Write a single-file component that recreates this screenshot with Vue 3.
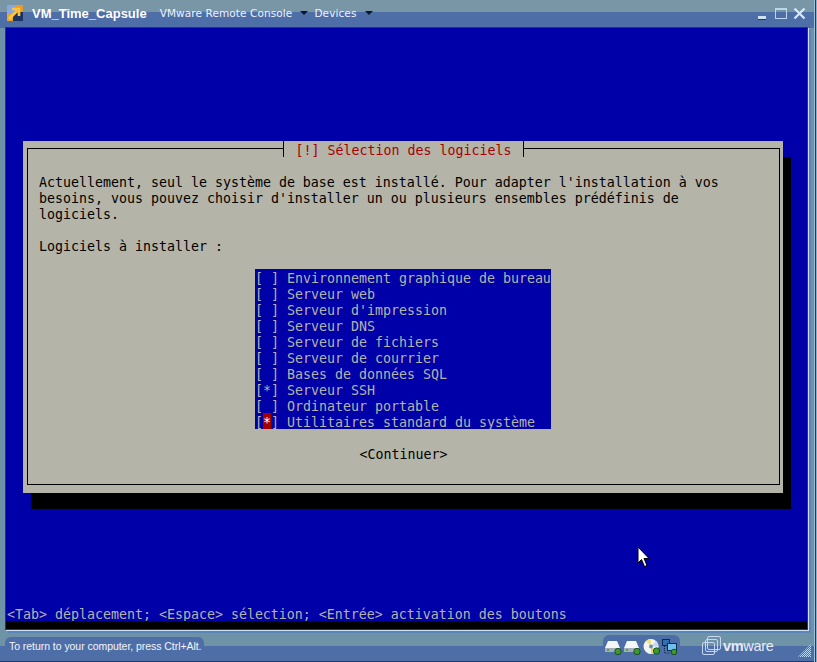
<script setup>
const intro = [
  "Actuellement, seul le système de base est installé. Pour adapter l'installation à vos",
  "besoins, vous pouvez choisir d'installer un ou plusieurs ensembles prédéfinis de",
  "logiciels.",
];
const items = [
  ["[ ]", "Environnement graphique de bureau"],
  ["[ ]", "Serveur web"],
  ["[ ]", "Serveur d'impression"],
  ["[ ]", "Serveur DNS"],
  ["[ ]", "Serveur de fichiers"],
  ["[ ]", "Serveur de courrier"],
  ["[ ]", "Bases de données SQL"],
  ["[*]", "Serveur SSH"],
  ["[ ]", "Ordinateur portable"],
  ["[*]", "Utilitaires standard du système", true],
];
</script>

<template>
  <div class="window">
    <header class="titlebar">
      <svg class="appicon" width="16" height="16" viewBox="0 0 16 16">
        <rect x="0" y="0" width="16" height="16" fill="#1c3464"/>
        <rect x="0" y="0" width="9" height="9" fill="#86a8e0"/>
        <rect x="9" y="0" width="7" height="7" fill="#e89a28"/>
        <rect x="0" y="9" width="6" height="7" fill="#e8a830"/>
        <path d="M2 14 L10 6 M5 4h7v7" stroke="#ffc43c" stroke-width="2.6" fill="none"/>
      </svg>
      <span class="wintitle">VM_Time_Capsule</span>
      <span class="menu">VMware Remote Console</span>
      <i class="caret"></i>
      <span class="menu devices">Devices</span>
      <i class="caret"></i>
      <span class="spacer"></span>
      <span class="wbtn min"></span>
      <span class="wbtn max"></span>
      <svg class="wbtn close" width="13" height="13" viewBox="0 0 13 13">
        <path d="M1.5 1.5 L11.5 11.5 M11.5 1.5 L1.5 11.5" stroke="#d8e8f6" stroke-width="2.2"/>
      </svg>
    </header>

    <main class="console">
      <section class="dialog">
        <div class="frame">
          <div class="dlgtitle"><span>[!] Sélection des logiciels</span></div>
          <p v-for="l in intro" :key="l" class="line">{{ l }}</p>
          <p class="line blank"> </p>
          <p class="line">Logiciels à installer :</p>
          <p class="line blank"> </p>
          <ul class="list">
            <li v-for="it in items" :key="it[1]" class="row">
              <template v-if="it[2]">[<b class="cursor">*</b>]</template>
              <template v-else>{{ it[0] }}</template>
              <span class="label">{{ it[1] }}</span>
            </li>
          </ul>
          <p class="line blank"> </p>
          <p class="line cont">&lt;Continuer&gt;</p>
        </div>
      </section>

      <svg class="pointer" width="14" height="22" viewBox="0 0 14 22">
        <path d="M1 1 V17 L4.5 13.5 L7.5 20.5 L10 19.5 L7 12.5 H12 Z" fill="#fff" stroke="#000" stroke-width="1"/>
      </svg>

      <div class="hint">&lt;Tab&gt; déplacement; &lt;Espace&gt; sélection; &lt;Entrée&gt; activation des boutons</div>
      <div class="blackbar"></div>
    </main>

    <footer class="statusbar">
      <span class="tip">To return to your computer, press Ctrl+Alt.</span>
      <span class="spacer"></span>
      <div class="devs">
        <svg v-for="n in 2" :key="n" width="17" height="15" viewBox="0 0 17 15">
          <path d="M3 1 H12 L15 8 H0 Z" fill="#f4f6f8"/>
          <rect x="0" y="8" width="15" height="4" fill="#a4aebb"/>
          <rect x="2" y="9" width="2" height="2" fill="#4caa3c"/>
          <circle cx="13" cy="11.5" r="3.2" fill="#3c9a2c" stroke="#123c12" stroke-width=".8"/>
        </svg>
        <svg width="17" height="16" viewBox="0 0 17 16">
          <circle cx="8" cy="7.5" r="7.5" fill="#f2f4f6"/>
          <path d="M8 7.5 L3 2 A7.5 7.5 0 0 1 8 0 Z" fill="#f3e27a"/>
          <path d="M8 7.5 L13 13 A7.5 7.5 0 0 1 8 15 Z" fill="#e8d860"/>
          <path d="M8 7.5 L13 2 A7.5 7.5 0 0 1 15.5 7.5 Z" fill="#c4d8f0"/>
          <circle cx="8" cy="7.5" r="2" fill="#6d8fb4"/>
          <circle cx="13.5" cy="12" r="3.2" fill="#3c9a2c" stroke="#123c12" stroke-width=".8"/>
        </svg>
        <svg width="16" height="16" viewBox="0 0 16 16">
          <rect x="0.5" y="0.5" width="7" height="6" fill="#2f6fb4" stroke="#0e2c50"/>
          <rect x="5.5" y="4.5" width="9" height="7" fill="#6cc0ec" stroke="#0e2c50"/>
          <path d="M2.5 7 V14 H8" stroke="#0e2c50" fill="none" stroke-dasharray="1 1"/>
          <circle cx="12" cy="13" r="2.8" fill="#3c9a2c" stroke="#123c12" stroke-width=".8"/>
        </svg>
      </div>
      <div class="brand">
        <svg width="20" height="20" viewBox="0 0 20 20" fill="none" stroke="#c6d6f2" stroke-width="1">
          <rect x="5.5" y="0.5" width="13" height="13" rx="1.5"/>
          <rect x="3.5" y="3.5" width="12" height="12" rx="1.5"/>
          <rect x="0.5" y="6.5" width="12" height="12" rx="1.5"/>
        </svg>
        <span class="logo"><b>vm</b>ware</span>
      </div>
      <svg class="grip" width="13" height="13" viewBox="0 0 13 13">
        <defs>
          <pattern id="gripdots" width="2" height="2" patternUnits="userSpaceOnUse">
            <rect x="0" y="0" width="1" height="1" fill="#b8dcfa"/>
            <rect x="1" y="1" width="1" height="1" fill="#b8dcfa"/>
          </pattern>
        </defs>
        <path d="M13 0 V13 H0 Z" fill="url(#gripdots)"/>
      </svg>
    </footer>
    <i class="edge"></i>
  </div>
</template>

<style>
html, body { margin: 0; padding: 0; background: #6f93a6; }
</style>

<style scoped>
.window {
  width: 817px;
  height: 662px;
  box-sizing: border-box;
  position: relative;
  display: flex;
  flex-direction: column;
  overflow: hidden;
  background: linear-gradient(#7896a6 0, #7896a6 12px, #4e6ea8 12px, #4e6ea8 28px);
  background-repeat: no-repeat;
  background-size: 100% 28px;
  background-color: #6f93a6;
  font-family: "Liberation Sans", sans-serif;
}
.edge {
  position: absolute;
  top: 0;
  right: 0;
  bottom: 0;
  width: 3px;
  box-sizing: border-box;
  background: #1d3a70;
  border-left: 1px solid #9cc0dc;
  border-right: 1px solid #8fb0c4;
}
.titlebar {
  height: 28px;
  flex: none;
  display: flex;
  align-items: center;
  padding: 0 11px 2px 7px;
  color: #eef4fb;
  box-sizing: border-box;
}
.appicon { flex: none; }
.wintitle { font-size: 13px; font-weight: 700; margin-left: 9px; color: #fff; }
.menu { margin-left: 13px; letter-spacing: .1px; font-family: "DejaVu Sans", sans-serif; font-size: 10.5px; }
.devices { margin-left: 6px; }
.caret { width: 0; height: 0; border: 4px solid transparent; border-top: 4px solid #0a1630; border-bottom: 0; margin-left: 8px; }
.spacer { flex: 1; }
.wbtn { flex: none; display: block; }
.min { width: 8px; height: 3px; background: #cfe0ef; border-bottom: 1px solid #1f3c54; margin-top: 9px; margin-right: 9px; }
.max { width: 10px; height: 8px; border: 1px solid #bcd6ea; border-top-width: 2px; margin-right: 6px; }
.console {
  flex: none;
  width: 801px;
  height: 601px;
  margin-left: 6px;
  background: #0000a8;
  outline: 1px solid #1d3a70;
  box-shadow: 1px 1px 0 1px #cfe0f5, 3px 3px 0 1px #5c86b8;
  position: relative;
  display: flex;
  flex-direction: column;
  font-family: "DejaVu Sans Mono", monospace;
  font-size: 13.29px;
  line-height: 20px;
}
.dialog {
  margin: 113px 0 0 17px;
  width: 760px;
  height: 352px;
  box-sizing: border-box;
  background: #b4b4a8;
  padding: 7px 3px 0 4px;
  box-shadow: 8px 16px 0 #000;
  color: #000;
}
.frame {
  height: 337px;
  box-sizing: border-box;
  border: 1px solid #000;
  padding: 24px 11px 0;
  position: relative;
}
.dlgtitle {
  position: absolute;
  top: -8px;
  left: 0;
  right: 0;
  height: 16px;
  text-align: center;
}
.dlgtitle span {
  display: inline-block;
  height: 16px;
  vertical-align: top;
  background: #b4b4a8;
  color: #a80000;
  padding: 0 12px;
  border-left: 1px solid #000;
  border-right: 1px solid #000;
}
.line { margin: 0; height: 16px; white-space: pre; }
.list {
  list-style: none;
  margin: 0 0 0 216px;
  padding: 0;
  width: 296px;
  background: #0000a8;
  color: #b4b4a8;
}
.row { height: 16px; white-space: pre; display: flex; }
.cursor { background: #a80000; color: #fff; font-weight: 400; width: 8px; height: 16px; display: block; }
.label { margin-left: 8px; }
.cont { text-align: center; }
.pointer { position: absolute; left: 631px; top: 518px; }
.hint {
  position: absolute;
  left: 1px;
  top: 577px;
  height: 16px;
  color: #b4b4a8;
  white-space: pre;
}
.blackbar { position: absolute; left: 0; right: 0; bottom: 0; height: 8px; background: #000; }
.statusbar {
  flex: 1;
  margin-top: 3px;
  display: flex;
  align-items: flex-start;
  padding-right: 6px;
  background: linear-gradient(#6f93a6 0, #6f93a6 14px, #4e6ea8 14px, #4e6ea8 29px, #1d3a70 29px);
}
.tip {
  margin-left: 5px;
  margin-top: 5px;
  height: 20px;
  padding: 0 3px 0 4px;
  line-height: 19px;
  font-size: 10.5px;
  letter-spacing: -.05px;
  color: #f0f5fb;
  background: #4e6ea8;
  border-radius: 6px 6px 0 0;
}
.devs {
  display: flex;
  align-items: center;
  gap: 2px;
  margin-top: 3px;
  height: 22px;
  width: 77px;
  box-sizing: border-box;
  padding: 2px 2px 0;
  background: #4e6ea8;
  border-radius: 6px 6px 0 0;
}
.brand { display: flex; align-items: center; margin: 4px 0 0 22px; gap: 1px; }
.logo { font-size: 14.5px; color: #e4ecf8; letter-spacing: -.3px; width: 50px; }
.logo b { font-weight: 700; }
.grip { margin: 12px 0 0 25px; flex: none; }
</style>
